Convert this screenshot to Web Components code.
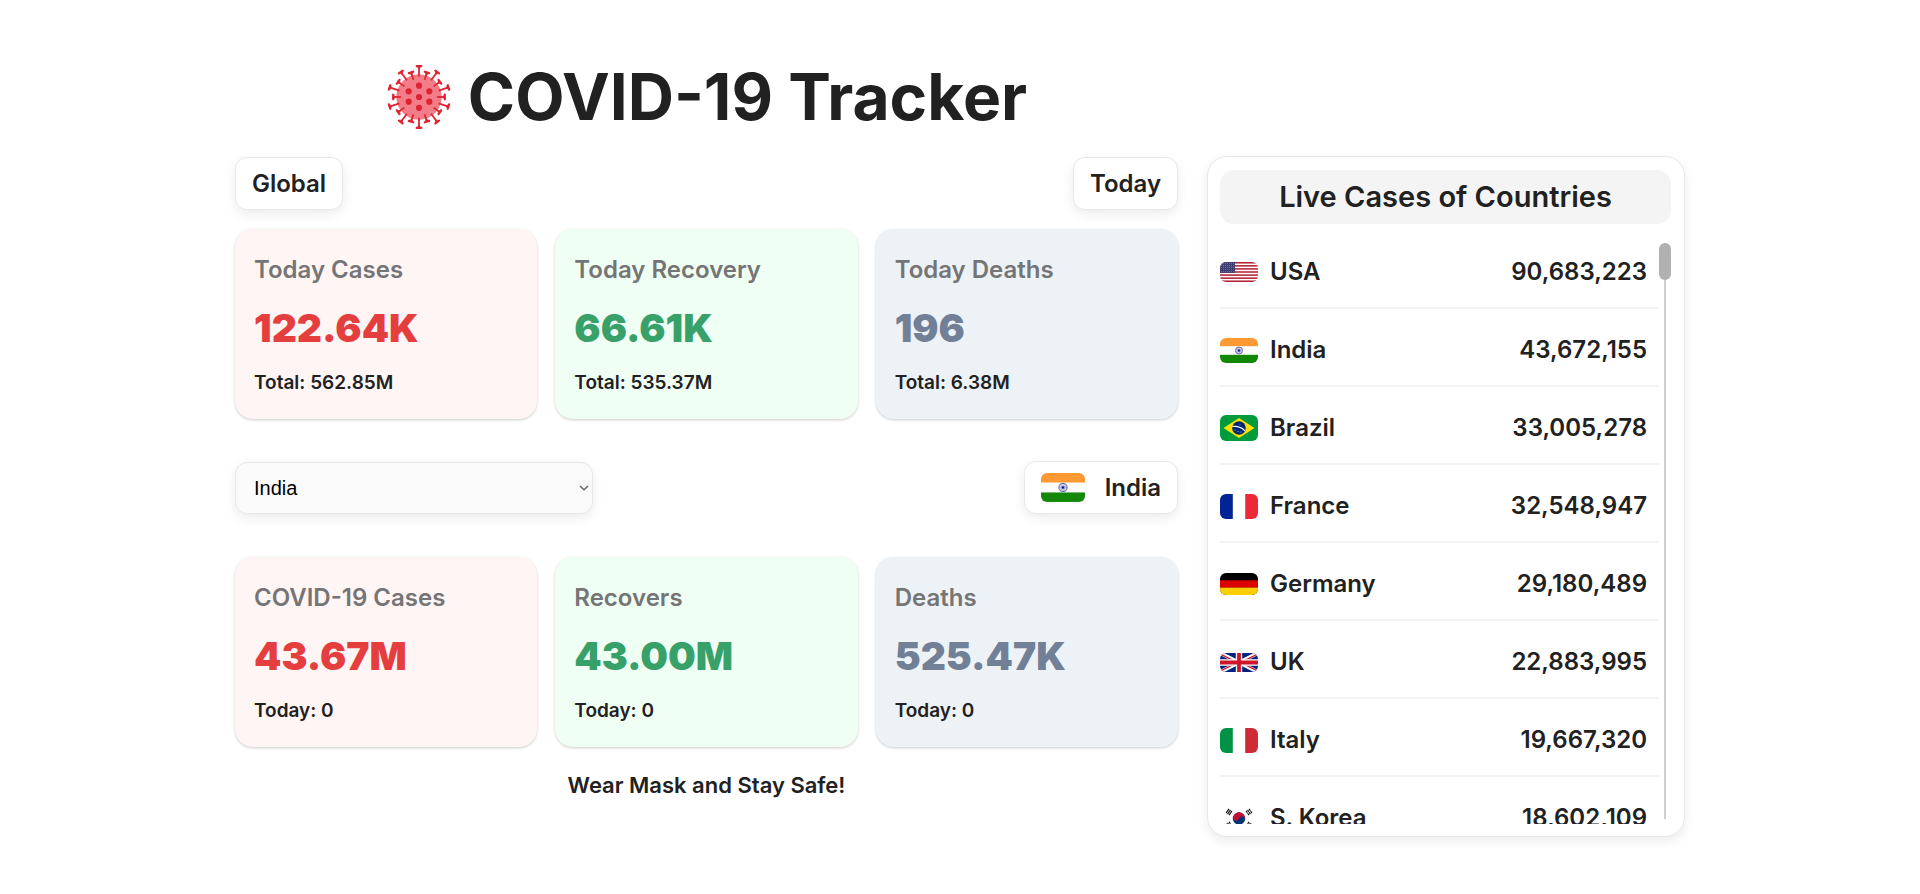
<!DOCTYPE html>
<html lang="en">
<head>
<meta charset="utf-8">
<meta name="viewport" content="width=device-width, initial-scale=1">
<title>COVID-19 Tracker</title>
<style>
  body {
    margin: 0;
    background: #fff;
    color: #212121;
    font-family: Inter, Roboto, sans-serif;
    font-weight: 600;
    --line: #e8e8e8;
    --lift: 0 4px 12px rgba(0, 0, 0, .08);
  }
</style>
</head>
<body>
<covid-app></covid-app>

<script>
const define = (name, html, setup) => {
  const template = document.createElement('template');
  template.innerHTML = html;
  customElements.define(name, class extends HTMLElement {
    constructor() {
      super();
      this.attachShadow({ mode: 'open' }).append(template.content.cloneNode(true));
    }
    connectedCallback() {
      if (setup) setup.call(this, this.shadowRoot);
    }
  });
};

/* ---------- flags ---------- */
const usStripes = [0, 2, 4, 6, 8, 10, 12]
  .map(i => `<rect y="${i * 20 / 13}" width="38" height="${20 / 13}" fill="#b22234"/>`).join('');
let usStars = '';
for (let y = 0; y < 5; y++)
  for (let x = 0; x < 7; x++)
    usStars += `<circle cx="${1.5 + x * 2}" cy="${1.2 + y * 2.05}" r=".45" fill="#b9b9d0"/>`;
let chakra = '';
for (let a = 0; a < 180; a += 30)
  chakra += `<path d="M-3.4 0H3.4" transform="rotate(${a})"/>`;
const koreaBars = (x, y, r, gaps) =>
  `<g transform="translate(${x} ${y}) rotate(${r})"><path d="M-2.6-1.8H2.6M-2.6 0H2.6M-2.6 1.8H2.6" stroke="#111" stroke-width="1.1"/>${gaps ? '<path d="M0-2.4V2.4" stroke="#fff" stroke-width=".6"/>' : ''}</g>`;

const FLAGS = {
  us: [38, 20, `<rect width="38" height="20" fill="#fff"/>${usStripes}<rect width="15" height="10.8" fill="#3c3b6e"/>${usStars}`],
  in: [38, 25, `<rect width="38" height="25" fill="#fff"/><rect width="38" height="8.2" fill="#f93"/><rect y="16.8" width="38" height="8.2" fill="#138808"/><g transform="translate(19 12.5)" fill="none" stroke="#4a4aa8" stroke-width=".4"><circle r="3.5" stroke-width=".8"/>${chakra}<circle r=".9" fill="#000088"/></g>`],
  br: [38, 26, `<rect width="38" height="26" fill="#009b3a"/><path d="M19 3L34.5 13L19 23L3.5 13Z" fill="#fedf00"/><circle cx="19" cy="13" r="6.8" fill="#002776"/><path d="M12.500 11.500Q20 10.500 25 15.800" fill="none" stroke="#fff" stroke-width="1.1"/><g fill="#cfd6e8"><circle cx="15" cy="15" r=".5"/><circle cx="18" cy="16.5" r=".5"/><circle cx="21" cy="17" r=".5"/><circle cx="20" cy="9.5" r=".4"/></g>`],
  fr: [38, 25, `<rect width="38" height="25" fill="#fff"/><rect width="12.8" height="25" fill="#002395"/><rect x="25.2" width="12.8" height="25" fill="#ed2939"/>`],
  de: [38, 22, `<rect width="38" height="22" fill="#000"/><rect y="7.3" width="38" height="7.4" fill="#d00"/><rect y="14.6" width="38" height="7.4" fill="#ffce00"/>`],
  gb: [38, 19, `<rect width="38" height="19" fill="#00247d"/><path d="M0 0L38 19M38 0L0 19" stroke="#fff" stroke-width="3.8"/><path d="M0 .9L18 9.9M20 9.1L38 18.1M38 .9L20 9.9M18 9.1L0 18.1" stroke="#cf142b" stroke-width="1.2"/><path d="M19 0V19M0 9.500H38" stroke="#fff" stroke-width="6.4"/><path d="M19 0V19M0 9.500H38" stroke="#cf142b" stroke-width="3.8"/>`],
  it: [38, 25, `<rect width="38" height="25" fill="#fff"/><rect width="12.8" height="25" fill="#009246"/><rect x="25.2" width="12.8" height="25" fill="#ce2b37"/>`],
  kr: [38, 25, `<rect width="38" height="25" fill="#fff"/><g transform="translate(19 12.5) rotate(20)"><circle r="6.2" fill="#003478"/><path d="M-6.2 0A6.2 6.2 0 0 1 6.2 0A3.1 3.1 0 0 0 0 0A3.1 3.1 0 0 1 -6.2 0Z" fill="#c60c30"/></g>${koreaBars(9, 6, -56, false)}${koreaBars(29, 6, 56, true)}${koreaBars(9, 19, 56, true)}${koreaBars(29, 19, -56, true)}`]
};

define('country-flag', `
  <style>
    :host { display: block; width: 38px; }
    svg { display: block; width: 100%; height: auto; border-radius: 6px; }
  </style>
  <svg aria-hidden="true"></svg>`, function (root) {
  const [w, h, art] = FLAGS[this.getAttribute('code')];
  const svg = root.querySelector('svg');
  svg.setAttribute('viewBox', `0 0 ${w} ${h}`);
  svg.innerHTML = art;
});

/* ---------- virus mark: twenty spikes, long and short in turn ---------- */
define('virus-mark', `
  <style>
    :host { display: block; width: 66px; height: 66px; }
    svg { display: block; width: 100%; height: 100%; }
  </style>
  <svg viewBox="-32 -32 64 64" aria-hidden="true">
    <circle r="22" fill="#f27d89"/>
    <g class="spikes" stroke="#de2230" fill="none"></g>
    <g fill="#de2230">
      <circle r="3"/><circle cy="-11" r="3"/><circle cy="10.5" r="3"/>
      <circle cx="-10" cy="-5.5" r="3"/><circle cx="10" cy="-5.5" r="3"/>
      <circle cx="-10" cy="4.5" r="3"/><circle cx="10" cy="4.5" r="3"/>
    </g>
  </svg>`, function (root) {
  let out = '';
  for (let i = 0; i < 20; i++) {
    const long = i % 2 === 0;
    const tip = long ? 30 : 25;
    out += `<g transform="rotate(${i * 18})">
      <path d="M0 ${long ? -20 : -17.5}V${-tip}" stroke-width="1.7"/>
      <path d="M-2.2 ${-tip}H2.2" stroke-width="2.2" stroke-linecap="round"/>
      <path d="M-1.8 ${-tip + 1}L0 ${-tip + 3}L1.8 ${-tip + 1}Z" fill="#de2230" stroke="none"/></g>`;
  }
  root.querySelector('.spikes').innerHTML = out;
});

define('page-title', `
  <style>
    :host { display: flex; align-items: center; justify-content: center; gap: 16px; }
    h1 { margin: 0; font-size: 64px; line-height: 76px; font-weight: 700; }
  </style>
  <virus-mark></virus-mark>
  <h1><slot></slot></h1>`);

define('info-badge', `
  <style>
    :host {
      display: flex; align-items: center; gap: 20px;
      box-sizing: border-box; height: 53px; padding: 0 16px;
      border: 1px solid var(--line); border-radius: 12px;
      background: #fff; box-shadow: var(--lift);
      font-size: 24px; line-height: 30px;
    }
    ::slotted(country-flag) { width: 44px; }
  </style>
  <slot></slot>`);

define('stat-card', `
  <style>
    :host {
      display: flex; flex-direction: column; gap: 18px;
      padding: 26px 19px 23px; border-radius: 18px;
      background: var(--card); box-shadow: 0 1px 3px rgba(0, 0, 0, .2);
    }
    :host([tone="red"]) { --card: #fff5f5; --ink: #e53e3e; }
    :host([tone="green"]) { --card: #f0fff4; --ink: #38a169; }
    :host([tone="slate"]) { --card: #edf2f7; --ink: #718096; }
    h2, p { margin: 0; }
    h2 { font-size: 24px; line-height: 30px; font-weight: 600; color: #757575; }
    .value { font-size: 39px; line-height: 49px; font-weight: 900; color: var(--ink); }
    .note { font-size: 19px; line-height: 26px; }
  </style>
  <h2><slot name="label"></slot></h2>
  <p class="value"><slot name="value"></slot></p>
  <p class="note"><slot></slot></p>`);

define('card-row', `
  <style>
    :host { display: grid; grid-template-columns: repeat(auto-fit, minmax(240px, 1fr)); gap: 18px; }
  </style>
  <slot></slot>`);

define('tool-bar', `
  <style>
    :host { display: flex; justify-content: space-between; align-items: center; padding: 1px 0; }
  </style>
  <slot></slot>`);

define('country-picker', `
  <style>
    :host { display: grid; align-items: center; width: 38%; }
    select, svg { grid-area: 1 / 1; }
    select {
      appearance: none; box-sizing: border-box; width: 100%; height: 52px;
      padding: 0 24px 0 18px; border: 1px solid var(--line); border-radius: 12px;
      background-color: #fafafa; box-shadow: var(--lift);
      color: #000; font: 400 20px "Liberation Sans", Arial, sans-serif;
    }
    svg { justify-self: end; width: 10px; height: 6px; margin-right: 4px; pointer-events: none; }
  </style>
  <select aria-label="Country">
    <option>India</option><option>USA</option><option>Brazil</option><option>France</option>
    <option>Germany</option><option>UK</option><option>Italy</option><option>S. Korea</option>
  </select>
  <svg viewBox="0 0 10 6" aria-hidden="true"><path d="M1 1L5 4.800L9 1" fill="none" stroke="#666" stroke-width="1.5"/></svg>`);

/* ---------- live list ---------- */
const COUNTRIES = [
  ['us', 'USA', '90,683,223'], ['in', 'India', '43,672,155'],
  ['br', 'Brazil', '33,005,278'], ['fr', 'France', '32,548,947'],
  ['de', 'Germany', '29,180,489'], ['gb', 'UK', '22,883,995'],
  ['it', 'Italy', '19,667,320'], ['kr', 'S. Korea', '18,602,109']
];

define('live-cases', `
  <style>
    :host {
      display: block; box-sizing: border-box; padding: 13px 13px 12px 12px;
      border: 1px solid var(--line); border-radius: 20px;
      background: #fff; box-shadow: var(--lift);
    }
    h2 {
      margin: 0 0 14px; padding: 8px; border-radius: 14px; background: #f4f4f4;
      font-size: 29px; line-height: 38px; font-weight: 600; text-align: center;
    }
    .view { display: grid; grid-template-columns: minmax(0, 1fr) 12px; height: 586px; }
    .scroller { overflow-y: auto; scrollbar-width: none; }
    table { width: 100%; border-spacing: 0; font-size: 24px; line-height: 30px; }
    td, th { padding: 26px 0 20px; border-bottom: 2px solid #f2f2f2; font-weight: 600; }
    tr:first-child > * { padding-top: 19px; }
    td:first-child { width: 38px; }
    country-flag { margin: -8px 0; }
    th { padding-left: 12px; text-align: left; }
    td:last-child { padding-right: 12px; text-align: right; }
    .rail {
      margin: 5px 0;
      background: linear-gradient(#cecece, #cecece) center / 2px 100% no-repeat;
    }
    .thumb { height: 37px; border-radius: 6px; background: #b1b1b1; }
  </style>
  <h2><slot></slot></h2>
  <div class="view">
    <div class="scroller" tabindex="0"><table><tbody></tbody></table></div>
    <div class="rail"><div class="thumb"></div></div>
  </div>`, function (root) {
  root.querySelector('tbody').innerHTML = COUNTRIES.map(([code, name, cases]) =>
    `<tr><td><country-flag code="${code}"></country-flag></td><th scope="row">${name}</th><td>${cases}</td></tr>`).join('');
  const scroller = root.querySelector('.scroller');
  const rail = root.querySelector('.rail');
  const thumb = root.querySelector('.thumb');
  scroller.addEventListener('scroll', () => {
    const part = scroller.scrollTop / (scroller.scrollHeight - scroller.clientHeight);
    thumb.style.transform = `translateY(${part * (rail.clientHeight - thumb.offsetHeight)}px)`;
  });
});

define('covid-app', `
  <style>
    :host { display: block; padding: 59px 24px 57px; }
    main {
      display: grid; grid-template-columns: minmax(0, 1fr) 478px; column-gap: 29px;
      align-items: start; max-width: 1450px; margin: 0 auto;
    }
    page-title { grid-column: 1; margin-bottom: 21px; }
    .board { grid-column: 1; }
    .global { margin-bottom: 18px; }
    .country { margin: 41px 0 42px; }
    live-cases { grid-column: 2; }
    footer { margin-top: 24px; font-size: 22px; line-height: 28px; text-align: center; }
    @media (max-width: 1100px) {
      main { grid-template-columns: minmax(0, 1fr); row-gap: 24px; }
      live-cases { grid-column: 1; }
    }
  </style>
  <main>
    <page-title>COVID-19 Tracker</page-title>
    <section class="board">
      <tool-bar class="global">
        <info-badge>Global</info-badge>
        <info-badge>Today</info-badge>
      </tool-bar>
      <card-row>
        <stat-card tone="red"><span slot="label">Today Cases</span><span slot="value">122.64K</span>Total: 562.85M</stat-card>
        <stat-card tone="green"><span slot="label">Today Recovery</span><span slot="value">66.61K</span>Total: 535.37M</stat-card>
        <stat-card tone="slate"><span slot="label">Today Deaths</span><span slot="value">196</span>Total: 6.38M</stat-card>
      </card-row>
      <tool-bar class="country">
        <country-picker></country-picker>
        <info-badge><country-flag code="in"></country-flag><span>India</span></info-badge>
      </tool-bar>
      <card-row>
        <stat-card tone="red"><span slot="label">COVID-19 Cases</span><span slot="value">43.67M</span>Today: 0</stat-card>
        <stat-card tone="green"><span slot="label">Recovers</span><span slot="value">43.00M</span>Today: 0</stat-card>
        <stat-card tone="slate"><span slot="label">Deaths</span><span slot="value">525.47K</span>Today: 0</stat-card>
      </card-row>
      <footer>Wear Mask and Stay Safe!</footer>
    </section>
    <live-cases>Live Cases of Countries</live-cases>
  </main>`);
</script>
</body>
</html>
